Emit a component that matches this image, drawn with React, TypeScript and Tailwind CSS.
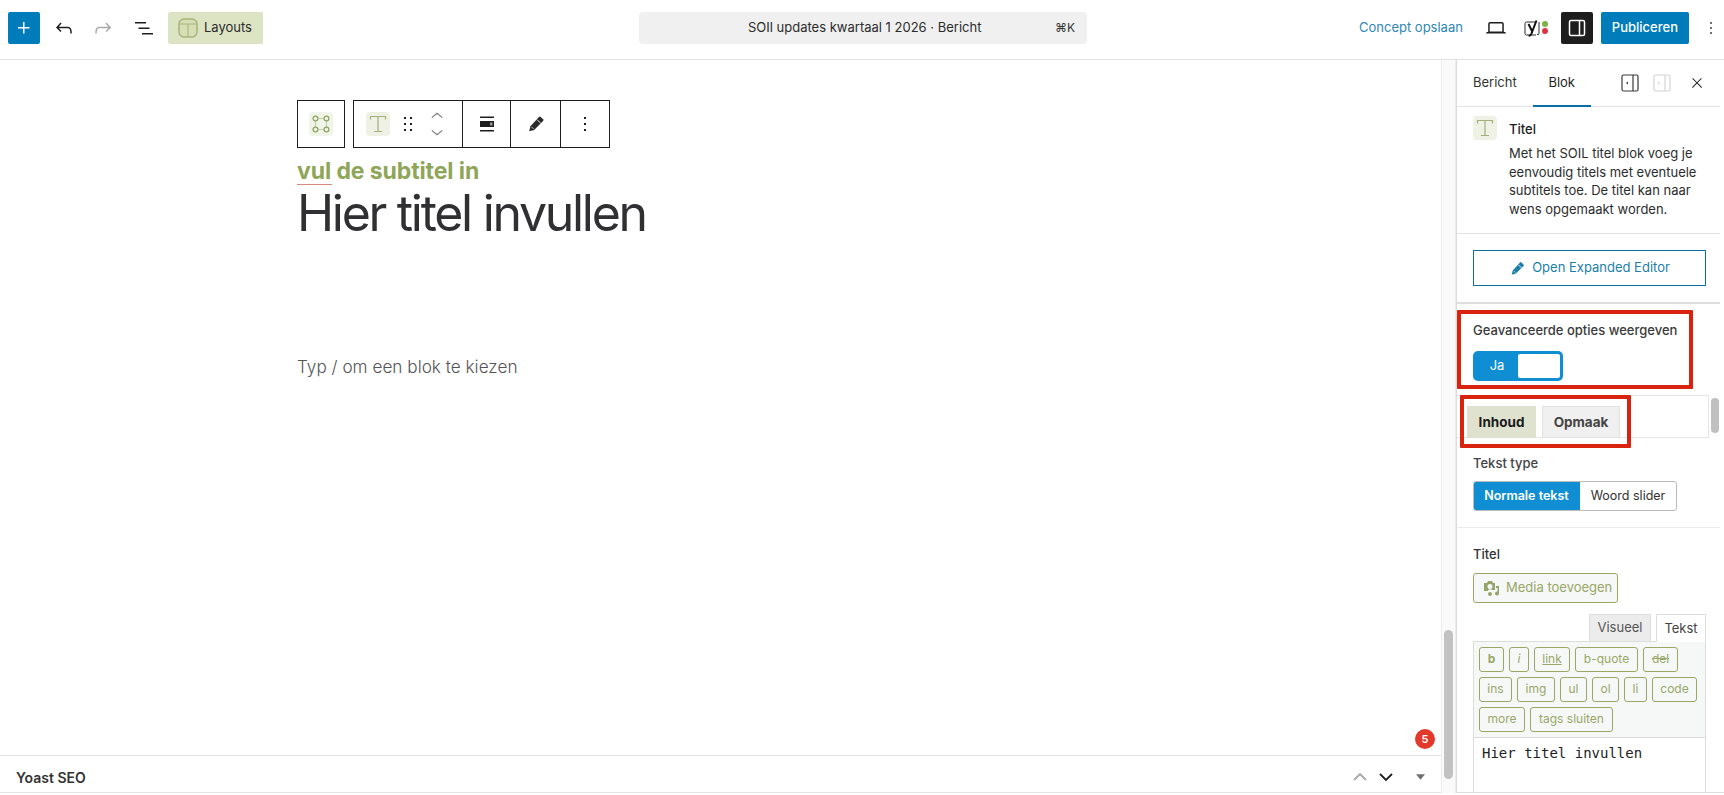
import React from "react";

const Svg = ({ d, size = 24, className = "", fill = "currentColor" }: { d: string; size?: number; className?: string; fill?: string }) => (
  <svg viewBox="0 0 24 24" width={size} height={size} className={className} fill={fill}>
    <path d={d} />
  </svg>
);

const P = {
  plus: "M11 12.5V17.5H12.5V12.5H17.5V11H12.5V6H11V11H6V12.5H11Z",
  undo: "M18.3 11.7c-.6-.6-1.4-.9-2.3-.9H6.7l2.9-3.3-1.1-1-4.5 5L8.5 16l1-1-2.7-2.7H16c.5 0 .9.2 1.3.5 1 1 1 3.4 1 4.5v.3h1.5v-.2c0-1.5 0-4.3-1.5-5.7z",
  redo: "M15.6 6.5l-1.1 1 2.9 3.3H8c-.9 0-1.7.3-2.3.9-1.4 1.5-1.4 4.2-1.4 5.6v.2h1.5v-.3c0-1.1 0-3.5 1-4.5.3-.3.7-.5 1.3-.5h9.2L14.5 15l1.1 1.1 4.6-4.6-4.6-5z",
  list: "M3 6h11v1.5H3V6Zm3.5 5.5h11V13h-11v-1.5ZM21 17H10v1.5h11V17Z",
  more: "M13 19h-2v-2h2v2zm0-6h-2v-2h2v2zm0-6h-2V5h2v2z",
  close: "M13 11.8l6.1-6.3-1-1-6.1 6.2-6.1-6.2-1 1 6.1 6.3-6.5 6.7 1 1 6.5-6.6 6.5 6.6 1-1z",
  drag: "M8 7h2V5H8v2zm0 6h2v-2H8v2zm0 6h2v-2H8v2zm6-14v2h2V5h-2zm0 8h2v-2h-2v2zm0 6h2v-2h-2v2z",
  laptop: "M20.5 16h-.7V8c0-1.1-.9-2-2-2H6.2c-1.1 0-2 .9-2 2v8h-.7c-.8 0-1.500.7-1.500 1.500h20c0-.8-.7-1.500-1.500-1.500zM5.700 8c0-.3.2-.5.5-.5h11.600c.3 0 .5.2.5.5v7.600H5.700V8z",
};

const Pencil = ({ size = 24, color = "#2a2a2a" }: { size?: number; color?: string }) => (
  <svg viewBox="0 0 24 24" width={size} height={size}>
    <path d="M15.500 3.500a1.500 1.500 0 0 1 2.100 0l2.900 2.900a1.500 1.500 0 0 1 0 2.100L9.800 19.200 3.800 20.700 5.300 14.700Z" fill={color} />
    <path d="M13.200 6.700l4.600 4.600" stroke="#fff" strokeWidth="1.100" />
    <path d="M6.500 15.300l2.700 2.700" stroke="#fff" strokeWidth="0.800" />
  </svg>
);

const TitleGlyph = ({ size = 24 }: { size?: number }) => (
  <svg viewBox="0 0 24 24" width={size} height={size} className="rounded-[4px] bg-[#eef1e4]" fill="none" stroke="#a3b07c" strokeWidth="1.200">
    <path d="M4.500 7.500V4.500h15v3M12 4.500v15M8 19.500h8" />
  </svg>
);

const CornerGlyph = () => (
  <svg viewBox="0 0 24 24" width="24" height="24" className="rounded-[4px] bg-[#f1f4e8]" fill="none" stroke="#8ea45c" strokeWidth="1.200">
    <circle cx="6.500" cy="6.500" r="2.400" />
    <circle cx="17.500" cy="6.500" r="2.400" />
    <circle cx="6.500" cy="17.500" r="2.400" />
    <circle cx="17.500" cy="17.500" r="2.400" />
    <path d="M9 6.500h6M9 17.500h6M6.500 9v6M17.500 9v6" strokeOpacity="0.450" />
  </svg>
);

const PanelIcon = ({ dim, side }: { dim?: boolean; side: "l" | "r" }) => (
  <svg viewBox="0 0 18 18" width="18" height="18" fill="none" stroke={dim ? "#d4d4d4" : "#3a3a3a"} strokeWidth="1.200">
    <rect x="1" y="1" width="16" height="16" rx="1.500" />
    <path d="M12 1v16" />
    <path d={side === "l" ? "M7 7.500v3L5 9Z" : "M5 7.500v3L7 9Z"} fill={dim ? "#d4d4d4" : "#3a3a3a"} stroke="none" />
  </svg>
);

const YoastIcon = () => (
  <div className="flex items-center gap-[1px]">
    <svg viewBox="0 0 18 18" width="18" height="18" fill="none">
      <path d="M13 3H3.500A1.500 1.500 0 0 0 2 4.500v10A1.500 1.500 0 0 0 3.500 16H13" stroke="#2a2a2a" strokeWidth="1" />
      <path d="M16 3v11.500a1 1 0 0 1-1 1h-1" stroke="#2a2a2a" strokeWidth="1" />
      <path d="M5.500 5l3.700 7.500M13.500 1.500 8.300 15c-.4 1-1.100 1.800-2.600 2" stroke="#111" strokeWidth="2" />
    </svg>
    <div className="flex flex-col gap-[1px]">
      <span className="block h-[6px] w-[6px] rounded-full bg-[#7cb342]" />
      <span className="block h-[6px] w-[6px] rounded-full bg-[#dc3545]" />
    </div>
  </div>
);

const QT = ({ children, className = "" }: { children: React.ReactNode; className?: string }) => (
  <span className={`flex h-[25px] items-center justify-center rounded-[3px] border border-[#9aa866] bg-[#f6f7f7] pb-[1px] text-[12px] text-[#98a868] ${className}`}>
    {children}
  </span>
);

export default function App() {
  return (
    <div className="flex h-[795px] w-[1724px] flex-col overflow-hidden bg-white pb-[2px] font-['Inter','Liberation_Sans',sans-serif] text-[13px] text-[#1e1e1e]">
      {/* top bar */}
      <header className="flex h-[60px] shrink-0 items-center whitespace-nowrap border-b border-[#e2e2e2] pb-[4px] pl-[8px]">
        <div className="flex h-[32px] w-[32px] items-center justify-center rounded-[2px] bg-[#007cba] text-white">
          <Svg d={P.plus} />
        </div>
        <div className="ml-[12px] flex h-[24px] w-[24px] items-center justify-center"><Svg d={P.undo} /></div>
        <div className="ml-[15px] flex h-[24px] w-[24px] items-center justify-center text-[#aaaaaa]"><Svg d={P.redo} /></div>
        <div className="ml-[17px] flex h-[24px] w-[24px] items-center justify-center"><Svg d={P.list} /></div>
        <div className="ml-[12px] flex h-[32px] w-[95px] items-center gap-[6px] rounded-[2px] bg-[#dde4c4] pl-[10px] text-[13px]">
          <svg viewBox="0 0 20 20" width="20" height="20" fill="none" stroke="#a5b57d" strokeWidth="1.500">
            <rect x="1" y="1" width="18" height="18" rx="5" fill="#d5deb4" />
            <path d="M1.500 6h17M10 6v13" strokeWidth="1" />
          </svg>
          <span className="text-[#2c2c2c]">Layouts</span>
        </div>
        <div className="ml-[376px] flex h-[32px] w-[448px] items-center rounded-[4px] bg-[#f0f0f0] pr-[12px]">
          <span className="ml-[109px] w-[312px] text-[13px] text-[#2c2c2c]">SOIl updates kwartaal 1 2026 · Bericht</span>
          <span className="ml-auto text-[12px] text-[#333]">⌘K</span>
        </div>
        <span className="ml-[272px] shrink-0 text-[13px] text-[#2f87b6]">Concept opslaan</span>
        <div className="ml-[21px] flex h-[24px] w-[24px] items-center justify-center"><Svg d={P.laptop} size={24} /></div>
        <div className="ml-[15px] flex w-[26px] items-center"><YoastIcon /></div>
        <div className="ml-[12px] flex h-[32px] w-[32px] items-center justify-center rounded-[2px] bg-[#1e1e1e]">
          <svg viewBox="0 0 18 18" width="18" height="18" fill="none" stroke="#fff" strokeWidth="1.500">
            <rect x="1.500" y="1.500" width="15" height="15" rx="1.500" />
            <path d="M11.500 1.500v15" />
          </svg>
        </div>
        <div className="ml-[8px] flex h-[32px] w-[88px] items-center justify-center rounded-[2px] bg-[#007cba] text-[13px] font-medium text-white">Publiceren</div>
        <div className="ml-[12px] flex h-[24px] w-[20px] items-center justify-center"><Svg d={P.more} /></div>
      </header>

      <div className="flex min-h-0 flex-1">
        {/* editor column */}
        <div className="relative flex min-w-0 flex-1 flex-col">
          <main className="flex-1 pl-[297px] pt-[40px]">
            <div className="flex items-stretch gap-[8px]">
              <div className="flex h-[48px] w-[48px] items-center justify-center border border-[#1e1e1e]"><CornerGlyph /></div>
              <div className="flex h-[48px] w-[257px] items-center border border-[#1e1e1e]">
                <div className="flex h-full w-[109px] items-center border-r border-[#1e1e1e] pl-[12px]">
                  <TitleGlyph />
                  <Svg d={P.drag} size={24} className="ml-[6px]" />
                  <div className="ml-[10px] flex flex-col items-center gap-[2px]">
                    <svg viewBox="0 0 16 8" width="14" height="8" fill="none" stroke="#777" strokeWidth="1.200"><path d="M2 7l6-5 6 5" /></svg>
                    <span className="h-[6px]" />
                    <svg viewBox="0 0 16 8" width="14" height="8" fill="none" stroke="#777" strokeWidth="1.200"><path d="M2 1l6 5 6-5" /></svg>
                  </div>
                </div>
                <div className="flex h-full w-[48px] items-center justify-center border-r border-[#1e1e1e]">
                  <svg viewBox="0 0 24 24" width="24" height="24"><path d="M5 4.500h14V6H5zM5 18h14v1.500H5zM5 9h14v6H5z" fill="#1e1e1e" /><path d="M15 10.500h2.500v3H15z" fill="#9a9a9a" /></svg>
                </div>
                <div className="flex h-full w-[50px] items-center justify-center border-r border-[#1e1e1e]">
                  <Pencil size={20} />
                </div>
                <div className="flex flex-1 items-center justify-center"><Svg d={P.more} /></div>
              </div>
            </div>
            <div className="relative mt-[7px] w-fit text-[23px] font-bold leading-[32px] tracking-[-0.1px] text-[#8fa558]">
              vul de subtitel in
              <span className="absolute left-0 top-[29px] h-[1px] w-[35px] bg-[#d98a7f]" />
            </div>
            <h1 className="mt-[-4px] text-[50px] font-normal leading-[60px] tracking-[-2.300px] text-[#303033]">Hier titel invullen</h1>
            <p className="mt-[111px] text-[17.200px] font-light leading-[26px] text-[#555]">Typ / om een blok te kiezen</p>
          </main>
          <div className="flex h-[38px] shrink-0 items-center border-y border-[#e4e4e4] pl-[16px] pr-[16px] pt-[6px]">
            <span className="text-[14px] font-semibold text-[#333]">Yoast SEO</span>
            <div className="ml-auto flex items-center">
              <svg viewBox="0 0 16 10" width="16" height="10" fill="none" stroke="#a8a8a8" strokeWidth="1.800"><path d="M2 8l6-6 6 6" /></svg>
              <svg viewBox="0 0 16 10" width="16" height="10" className="ml-[10px]" fill="none" stroke="#1e1e1e" strokeWidth="1.800"><path d="M2 2l6 6 6-6" /></svg>
              <svg viewBox="0 0 10 6" width="9" height="6" className="ml-[22px]"><path d="M0 0h10L5 6Z" fill="#6f6f6f" /></svg>
            </div>
          </div>
          <span className="absolute bottom-[44px] right-[6px] flex h-[20px] w-[20px] items-center justify-center rounded-full bg-[#e2392a] text-[11px] font-semibold text-white">5</span>
        </div>

        {/* gutter scrollbar */}
        <div className="flex w-[15px] shrink-0 flex-col justify-end border-x border-[#ececec] bg-[#fafafa] px-[2px] pb-[14px]">
          <div className="h-[149px] rounded-full bg-[#c2c2c2]" />
        </div>

        {/* sidebar */}
        <aside className="relative w-[268px] shrink-0 overflow-hidden border-b border-l border-[#dcdcdc]">
          <div className="mr-[4px] flex h-[47px] items-center border-b border-[#e2e2e2] pl-[16px]">
            <span className="text-[13px] text-[#333]">Bericht</span>
            <div className="relative ml-[16px] flex h-full w-[58px] items-center justify-center text-[13px]">
              Blok
              <span className="absolute bottom-[-1px] left-0 h-[2px] w-full bg-[#0b6fa4]" />
            </div>
            <div className="ml-[30px] flex items-center gap-[14px]">
              <PanelIcon side="l" />
              <PanelIcon side="r" dim />
            </div>
            <Svg d={P.close} size={16} className="ml-[18px]" />
          </div>

          <div className="mr-[4px] flex h-[127px] gap-[12px] border-b border-[#e2e2e2] pl-[16px] pt-[9px]">
            <TitleGlyph />
            <div className="w-[190px] pt-[4px]">
              <div className="text-[13px] font-medium leading-[18px]">Titel</div>
              <p className="mt-[6px] text-[13px] leading-[18.600px] text-[#2c2c2c]">
                Met het SOIL titel blok voeg je eenvoudig titels met eventuele subtitels toe. De titel kan naar wens opgemaakt worden.
              </p>
            </div>
          </div>

          <div className="mr-[4px] h-[70px] border-b-2 border-[#dedede] pl-[16px] pt-[16px]">
            <div className="flex h-[36px] w-[233px] items-center justify-center gap-[6px] border border-[#0d7199] text-[13px] text-[#1d7fa8]">
              <Pencil size={17} color="#1d7fa8" />
              Open Expanded Editor
            </div>
          </div>

          <div className="h-[91px] pl-[16px] pt-[18px]">
            <div className="text-[13px] font-medium leading-[16px] text-[#3a3a3a]">Geavanceerde opties weergeven</div>
            <div className="mt-[13px] flex h-[30px] w-[90px] items-center rounded-[5px] bg-[#0f8ed3] p-[3px]">
              <span className="w-[42px] text-center text-[13px] text-white">Ja</span>
              <span className="h-full flex-1 rounded-[2px] bg-white" />
            </div>
          </div>

          <div className="flex h-[43px] items-start">
            <div className="flex h-full w-[252px] items-start border-y border-r border-[#e6e6e6] pl-[10px] pt-[10px]">
              <span className="flex h-[32px] w-[69px] items-center justify-center bg-[#dfe2cf] text-[13.500px] font-bold text-[#1a1a1a]">Inhoud</span>
              <span className="ml-[6px] flex h-[32px] w-[78px] items-center justify-center border border-[#e2e2e2] bg-[#f0f0f0] text-[13.500px] font-bold text-[#444]">Opmaak</span>
            </div>
            <span className="ml-[2px] mt-[3px] h-[35px] w-[8px] rounded-full bg-[#c0c0c0]" />
          </div>

          <div className="mr-[4px] h-[90px] border-b border-[#ececec] pl-[16px] pt-[16px]">
            <div className="text-[13px] font-medium leading-[18px] text-[#444]">Tekst type</div>
            <div className="mt-[9px] flex h-[30px] w-[204px] overflow-hidden rounded-[3px] border border-[#bbb] text-[12.500px]">
              <span className="ml-[-1px] flex w-[107px] items-center justify-center bg-[#0f8ed3] font-semibold text-white">Normale tekst</span>
              <span className="flex flex-1 items-center justify-center text-[#333]">Woord slider</span>
            </div>
          </div>

          <div className="pl-[16px] pt-[17px]">
            <div className="text-[13px] font-medium leading-[18px] text-[#333]">Titel</div>
            <div className="mt-[10px] flex h-[30px] w-[145px] items-center gap-[5px] rounded-[3px] border border-[#9aa866] bg-[#f6f7f7] pl-[9px] text-[13px] text-[#98a868]">
              <svg viewBox="0 0 18 18" width="18" height="18" fill="#95a56a">
                <path d="M1 4h3l1-2h4l1 2h2v7H9.500a3 3 0 0 0-4.800 1H1ZM7 5a2.500 2.500 0 1 0 0 5 2.500 2.500 0 0 0 0-5ZM13 7h3v7.500a2 2 0 1 1-1.500-2V9H13ZM7 13a2 2 0 1 1 0 4 2 2 0 0 1 0-4Z" />
              </svg>
              Media toevoegen
            </div>
            <div className="mt-[10px] flex h-[28px] w-[233px] items-end justify-end gap-[5px]">
              <span className="flex h-[27px] w-[62px] items-center justify-center border border-b-0 border-[#ddd] bg-[#ececec] text-[13px] text-[#555]">Visueel</span>
              <span className="z-10 mb-[-1px] flex h-[28px] w-[50px] items-center justify-center border border-b-0 border-[#ddd] bg-white text-[13px] text-[#444]">Tekst</span>
            </div>
            <div className="w-[233px] border border-[#dddddd] bg-[#f6f7f7] px-[5px] pt-[5px]">
              <div className="flex h-[30px] gap-[5px]">
                <QT className="w-[25px] font-bold">b</QT>
                <QT className="w-[20px] italic">i</QT>
                <QT className="w-[36px] underline">link</QT>
                <QT className="w-[63px]">b-quote</QT>
                <QT className="w-[35px] line-through">del</QT>
              </div>
              <div className="flex h-[30px] gap-[5px]">
                <QT className="w-[33px]">ins</QT>
                <QT className="w-[38px]">img</QT>
                <QT className="w-[27px]">ul</QT>
                <QT className="w-[27px]">ol</QT>
                <QT className="w-[23px]">li</QT>
                <QT className="w-[45px]">code</QT>
              </div>
              <div className="flex h-[30px] gap-[5px]">
                <QT className="w-[46px]">more</QT>
                <QT className="w-[83px]">tags sluiten</QT>
              </div>
            </div>
            <div className="h-[80px] w-[233px] border-x border-[#dddddd] bg-white pl-[8px] pt-[5px] font-['DejaVu_Sans_Mono',monospace] text-[14px] leading-[20px] text-[#222]">
              Hier titel invullen
            </div>
          </div>

          {/* annotation frames */}
          <div className="pointer-events-none absolute left-0 top-[250px] h-[79px] w-[236px] rounded-[1px] border-[4px] border-[#d9230f]" />
          <div className="pointer-events-none absolute left-[3px] top-[335px] h-[53px] w-[171px] rounded-[1px] border-[4px] border-[#d9230f]" />
        </aside>
      </div>
    </div>
  );
}
